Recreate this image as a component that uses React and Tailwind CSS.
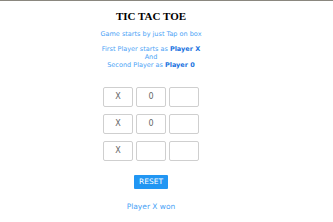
export default function App() {
  const board = ['X', '0', '', 'X', '0', '', 'X', '', ''];

  return (
    <div className="min-h-screen bg-white border-t border-[#8a877f]">
      <div className="w-[302px] flex flex-col items-center font-['DejaVu_Sans',sans-serif] text-[#4aa3f6]">
        <h1 className="mt-[9px] font-['Liberation_Serif',serif] font-bold text-[11px] leading-[12px] text-black">TIC TAC TOE</h1>
        <p className="mt-[8px] text-[6.5px] leading-[8px]">Game starts by just Tap on box</p>
        <p className="mt-[7px] text-[6.5px] leading-[8px] text-center">
          First Player starts as <b className="text-[#1a73e0]">Player X</b>
          <br />
          And
          <br />
          Second Player as <b className="text-[#1a73e0]">Player 0</b>
        </p>
        <div className="mt-[18px] grid grid-cols-3 gap-x-[3px] gap-y-[7px]">
          {board.map((v, i) => (
            <button
              key={i}
              className="w-[30px] h-[20px] border border-[#cfcfcf] rounded-[2px] bg-white text-[#666] text-[8px] flex items-center justify-center"
            >
              {v}
            </button>
          ))}
        </div>
        <button className="mt-[14px] w-[34px] h-[14px] rounded-[1px] bg-[#2196f3] text-white text-[7.5px] leading-[14px]">RESET</button>
        <p className="mt-[13px] text-[7.5px] leading-[9px]">Player X won</p>
      </div>
    </div>
  );
}
